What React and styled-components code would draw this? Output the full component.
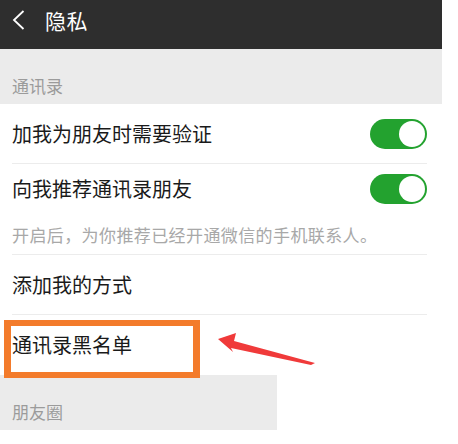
import React from "react";
import styled, { createGlobalStyle } from "styled-components";

const GlobalStyle = createGlobalStyle`
  html, body {
    margin: 0;
    padding: 0;
    background: #fff;
  }
  body {
    font-family: "Noto Sans CJK SC", "Noto Sans", sans-serif;
  }
`;

const Screen = styled.div`
  position: relative;
  width: 442px;
  height: 444px;
  background: #fff;
`;

const TopBar = styled.div`
  display: flex;
  align-items: center;
  box-sizing: border-box;
  height: 49px;
  padding: 0 0 9px 12px;
  background: #2e2e2e;
  color: #fff;
`;

const Title = styled.span`
  margin-left: 19px;
  font-size: 21px;
  line-height: 24px;
  letter-spacing: 0.5px;
`;

const SectionHead = styled.div`
  display: flex;
  align-items: flex-end;
  box-sizing: border-box;
  width: ${(p) => p.width || 442}px;
  height: 55px;
  padding: 0 12px 8px;
  background: #ebebeb;
  color: #9b9b9b;
  font-size: 17px;
  line-height: 20px;
`;

const Row = styled.div`
  display: flex;
  align-items: center;
  justify-content: space-between;
  height: ${(p) => p.h || 59}px;
  margin: 0 15px 0 12px;
  border-bottom: ${(p) => (p.noLine ? "none" : "1px solid #ececec")};
  color: #1a1a1a;
  font-size: 20px;
  line-height: 24px;
`;

const Hint = styled.div`
  display: flex;
  align-items: center;
  height: 40px;
  margin: 0 15px 0 12px;
  border-bottom: 1px solid #ececec;
  color: #a8a8a8;
  font-size: 17px;
  letter-spacing: 0.4px;
`;

const Toggle = styled.div`
  display: flex;
  justify-content: flex-end;
  align-items: center;
  box-sizing: border-box;
  width: 57px;
  height: 30px;
  padding: 2px;
  border-radius: 15px;
  background: #23a22f;
`;

const Knob = styled.div`
  width: 26px;
  height: 26px;
  border-radius: 50%;
  background: #fff;
`;

const Highlight = styled.div`
  position: absolute;
  left: 4px;
  top: 320px;
  box-sizing: border-box;
  width: 196px;
  height: 58px;
  border: solid #f37b2b;
  border-width: 6px 7px;
`;

const Arrow = styled.svg`
  position: absolute;
  left: 214px;
  top: 328px;
`;

const BackIcon = () => (
  <svg width="14" height="20" viewBox="0 0 14 20">
    <polyline
      points="11.5,1 2,10 11.5,19"
      fill="none"
      stroke="#fff"
      strokeWidth="1.8"
      strokeLinejoin="miter"
    />
  </svg>
);

const Switch = () => (
  <Toggle>
    <Knob />
  </Toggle>
);

export default function App() {
  return (
    <>
      <GlobalStyle />
      <Screen>
        <TopBar>
          <BackIcon />
          <Title>隐私</Title>
        </TopBar>

        <SectionHead>通讯录</SectionHead>
        <Row>
          加我为朋友时需要验证
          <Switch />
        </Row>
        <Row h={50} noLine>
          向我推荐通讯录朋友
          <Switch />
        </Row>
        <Hint>开启后，为你推荐已经开通微信的手机联系人。</Hint>
        <Row>添加我的方式</Row>
        <Row h={60} noLine>
          通讯录黑名单
        </Row>

        <SectionHead width={277}>朋友圈</SectionHead>

        <Highlight />
        <Arrow width="106" height="42" viewBox="0 0 106 42">
          <polygon
            points="4,11 22,5 20,13 101,35 97,37 17,20 19,24"
            fill="#f03a3a"
          />
        </Arrow>
      </Screen>
    </>
  );
}
